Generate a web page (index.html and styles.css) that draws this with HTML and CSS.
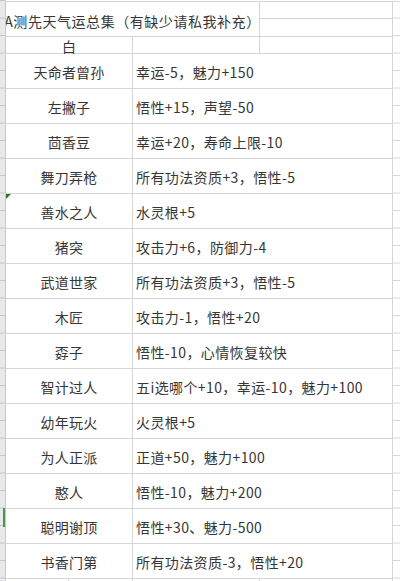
FILE: index.html
```html
<!DOCTYPE html>
<html lang="zh-CN">
<head>
<meta charset="utf-8">
<title>测先天气运总集</title>
<link rel="stylesheet" href="styles.css">
</head>
<body>
<div class="sheet">
  <div class="rowhead"><span class="sel"></span></div>
  <div class="grid">
    <div class="cell title">A测先天气运总集（有缺少请私我补充）</div>
    <div class="cell c1"></div>
    <div class="cell c2"></div>
    <div class="colD"></div>

    <div class="cell name r3">白</div>
    <div class="cell b3"></div>
    <div class="cell c3"></div>

    <div class="cell name">天命者曾孙</div><div class="cell eff">幸运-5，魅力+150</div>
    <div class="cell name">左撇子</div><div class="cell eff">悟性+15，声望-50</div>
    <div class="cell name">茴香豆</div><div class="cell eff">幸运+20，寿命上限-10</div>
    <div class="cell name">舞刀弄枪</div><div class="cell eff">所有功法资质+3，悟性-5</div>
    <div class="cell name flagged"><span class="flag"></span>善水之人</div><div class="cell eff">水灵根+5</div>
    <div class="cell name">猪突</div><div class="cell eff">攻击力+6，防御力-4</div>
    <div class="cell name">武道世家</div><div class="cell eff">所有功法资质+3，悟性-5</div>
    <div class="cell name">木匠</div><div class="cell eff">攻击力-1，悟性+20</div>
    <div class="cell name">孬子</div><div class="cell eff">悟性-10，心情恢复较快</div>
    <div class="cell name">智计过人</div><div class="cell eff">五i选哪个+10，幸运-10，魅力+100</div>
    <div class="cell name">幼年玩火</div><div class="cell eff">火灵根+5</div>
    <div class="cell name">为人正派</div><div class="cell eff">正道+50，魅力+100</div>
    <div class="cell name">憨人</div><div class="cell eff">悟性-10，魅力+200</div>
    <div class="cell name">聪明谢顶</div><div class="cell eff">悟性+30、魅力-500</div>
    <div class="cell name">书香门第</div><div class="cell eff">所有功法资质-3，悟性+20</div>

    <div class="cell lastA"><span class="half"></span><span class="half2"></span></div>
    <div class="cell lastB"></div>
    <div class="cell lastC"></div>
  </div>
</div>
</body>
</html>
```

FILE: styles.css
```css
html, body {
  margin: 0;
  padding: 0;
  background: #ffffff;
  overflow: hidden;
}

.sheet {
  display: flex;
  width: 400px;
  height: 581px;
  overflow: hidden;
  font-family: "Noto Sans CJK SC", "Noto Sans", sans-serif;
  font-size: 14px;
  color: #363636;
}

.rowhead {
  position: relative;
  flex: 0 0 5px;
  border-right: 1px solid #c9c9ce;
  background-color: #e9e9ec;
  background-image: linear-gradient(to bottom, transparent 17px, #c6c6cb 17px, #c6c6cb 18px, transparent 18px);
  background-size: 100% 17.5px;
  background-position: 0 1px;
  z-index: 2;
}

.sel {
  position: absolute;
  top: 508px;
  left: 3px;
  width: 2px;
  height: 19px;
  background: #3f9a45;
}

.grid {
  flex: 1;
  display: grid;
  grid-template-columns: 127px 127px 133px 1fr;
  grid-template-rows: 17px 18px 17px repeat(15, 35px) 12px;
  margin-top: 1px;
  border-top: 1px solid #d6d6d6;
  align-self: flex-start;
}

.cell {
  box-sizing: border-box;
  border-right: 1px solid #d6d6d6;
  border-bottom: 1px solid #d6d6d6;
  display: flex;
  align-items: center;
  white-space: nowrap;
  min-width: 0;
}

.title {
  grid-column: 1 / 3;
  grid-row: 1 / 3;
  justify-content: center;
  padding-top: 3px;
  letter-spacing: 0.55px;
  overflow: visible;
  z-index: 1;
}

.c1 { grid-column: 3; grid-row: 1; }
.c2 { grid-column: 3; grid-row: 2; }
.b3 { grid-column: 2; grid-row: 3; }
.c3 { grid-column: 3; grid-row: 3; }

.colD {
  grid-column: 4;
  grid-row: 1 / -1;
  background-image: linear-gradient(to bottom, transparent 16px, #d6d6d6 16px, #d6d6d6 17px, transparent 17px);
  background-size: 100% 17.5px;
}

.name {
  grid-column: 1;
  justify-content: center;
  padding-top: 1px;
  letter-spacing: 0.2px;
}

.r3 { grid-row: 3; }

.eff {
  grid-column: 2 / 4;
  padding-left: 3px;
  padding-top: 1px;
  letter-spacing: 0.4px;
}

.flagged { position: relative; }

.flag {
  position: absolute;
  top: 0;
  left: 0;
  width: 0;
  height: 0;
  border-top: 5px solid #1f7a34;
  border-right: 5px solid transparent;
}

.lastA {
  grid-column: 1;
  align-items: stretch;
}

.half {
  flex: 0 0 62px;
  border-right: 1px solid #d6d6d6;
}

.half2 { flex: 1; }

.lastB { grid-column: 2; }
.lastC { grid-column: 3; }
```
